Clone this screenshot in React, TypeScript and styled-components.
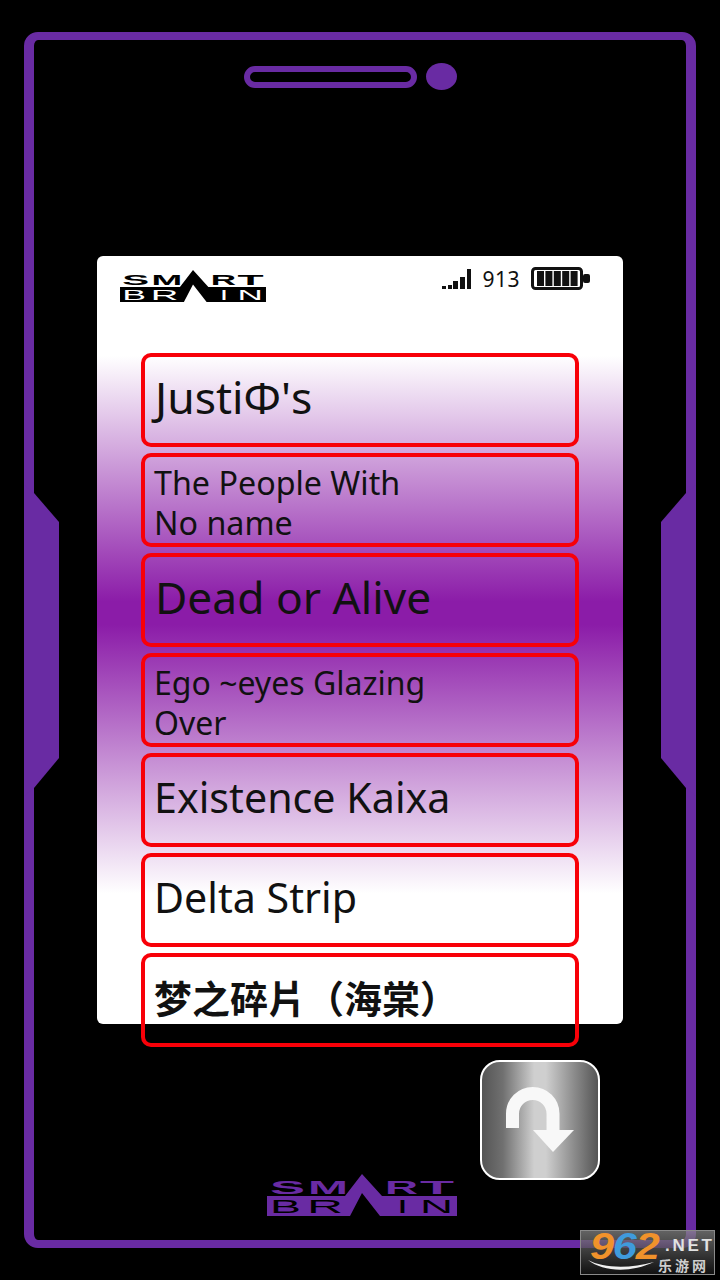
import React from 'react';
import styled, { createGlobalStyle } from 'styled-components';

const GlobalStyle = createGlobalStyle`
  html, body {
    margin: 0;
    background: #000;
  }
  * {
    box-sizing: border-box;
  }
`;

const PURPLE = '#692ba3';

const Page = styled.div`
  position: relative;
  width: 720px;
  height: 1280px;
  padding: 32px 24px;
  background: #000;
  overflow: hidden;
  font-family: 'Noto Sans', 'Open Sans', sans-serif;
`;

const Frame = styled.div`
  position: relative;
  height: 1216px;
  border: solid ${PURPLE};
  border-width: 8px 10px;
  border-radius: 14px;
  display: flex;
  flex-direction: column;
`;

const SideBulge = styled.div<{ $side: 'left' | 'right' }>`
  position: absolute;
  top: 445px;
  ${(p) => p.$side}: -10px;
  width: 35px;
  height: 311px;
  background: ${PURPLE};
  clip-path: ${(p) =>
    p.$side === 'left'
      ? 'polygon(0 0, 10px 8px, 35px 37px, 35px 273px, 10px 303px, 0 311px)'
      : 'polygon(100% 0, 25px 8px, 0 37px, 0 273px, 25px 303px, 100% 311px)'};
`;

const Speaker = styled.div`
  display: flex;
  justify-content: center;
  align-items: center;
  gap: 9px;
  height: 27px;
  margin-top: 23px;
  padding-right: 19px;
`;

const SpeakerSlot = styled.div`
  width: 173px;
  height: 22px;
  border: 6px solid ${PURPLE};
  border-radius: 11px;
`;

const SpeakerDot = styled.div`
  width: 31px;
  height: 27px;
  border-radius: 50%;
  background: ${PURPLE};
`;

const Screen = styled.div`
  height: 768px;
  margin: 166px 63px 0;
  border-radius: 6px;
  background: linear-gradient(
    180deg,
    #fff 0%,
    #fff 13%,
    #8b1ca8 45%,
    #8b1ca8 48%,
    #fff 83%,
    #fff 100%
  );
`;

const StatusBar = styled.div`
  display: flex;
  justify-content: space-between;
  align-items: flex-start;
  height: 97px;
  padding: 11px 33px 0 23px;
`;

const TopLogo = styled.div`
  display: flex;
  margin-top: 3px;
`;

const StatusRight = styled.div`
  display: flex;
  align-items: center;
  gap: 11px;
  color: #111;
  font-size: 21px;
  line-height: 22px;
  letter-spacing: 0.5px;
`;

const List = styled.div`
  display: flex;
  flex-direction: column;
  gap: 6px;
  padding: 0 44px;
`;

const Row = styled.div<{ $size: number; $cjk?: boolean; $lines: number }>`
  height: 94px;
  padding: ${(p) => (p.$lines > 1 ? '6px' : '0')} ${(p) => (p.$size > 43 ? '10px' : '9px')}
    ${(p) => (p.$lines > 1 ? '0' : '6px')};
  border: 4px solid #f80008;
  border-radius: 10px;
  display: flex;
  align-items: center;
  color: #111;
  font-size: ${(p) => p.$size}px;
  line-height: 40px;
  font-weight: ${(p) => (p.$cjk ? 700 : 400)};
  font-family: ${(p) =>
    p.$cjk ? "'Noto Sans CJK TC', sans-serif" : "'Noto Sans', 'Open Sans', sans-serif"};
`;

const Bottom = styled.div`
  display: flex;
  flex-direction: column;
`;

const ReturnButton = styled.div`
  align-self: flex-end;
  width: 120px;
  height: 120px;
  margin: 36px 86px 0 0;
  border: 2px solid #fff;
  border-radius: 20px;
  background: linear-gradient(90deg, #555 0%, #707070 18%, #cfcfcf 45%, #cfcfcf 55%, #8a8a8a 80%, #555 100%);
  display: flex;
`;

const BottomLogo = styled.div`
  align-self: center;
  margin: -6px 0 0 4px;
  display: flex;
`;

const Watermark = styled.div`
  position: absolute;
  right: 5px;
  bottom: 5px;
  width: 135px;
  height: 45px;
  border: 1px solid #8a8a8a;
  background: linear-gradient(180deg, rgba(140, 140, 140, 0.7), rgba(20, 20, 20, 0.85));
  font-family: 'Liberation Sans', sans-serif;
`;

const Digits = styled.div`
  position: absolute;
  top: -2px;
  left: 9px;
  font-weight: 700;
  font-style: italic;
  font-size: 36px;
  line-height: 36px;
  letter-spacing: -1px;
  transform: scaleX(1.2);
  transform-origin: left top;
`;

const Digit = styled.span<{ $color: string }>`
  color: ${(p) => p.$color};
`;

const Net = styled.div`
  position: absolute;
  top: 6px;
  left: 84px;
  color: #e2e2e2;
  font-weight: 700;
  font-size: 17px;
  line-height: 18px;
  letter-spacing: 2.7px;
`;

const WatermarkName = styled.div`
  position: absolute;
  top: 26px;
  left: 77px;
  color: #cfcfcf;
  font-family: 'Noto Sans CJK SC', sans-serif;
  font-weight: 700;
  font-size: 14px;
  line-height: 16px;
  letter-spacing: 3px;
`;

const Swoosh = styled.svg`
  position: absolute;
  left: 6px;
  bottom: 2px;
`;

const topLetters = [
  { t: 'S', x: 3, w: 35 },
  { t: 'M', x: 41, w: 40 },
  { t: 'R', x: 118, w: 33 },
  { t: 'T', x: 153, w: 34 },
];

const bottomLetters = [
  { t: 'B', x: 3, w: 31 },
  { t: 'R', x: 40, w: 36 },
  { t: 'I', x: 130, w: 11 },
  { t: 'N', x: 153, w: 33 },
];

const Logo: React.FC<{ width: number; color: string; cut: string }> = ({ width, color, cut }) => (
  <svg width={width} height={(width * 42) / 190} viewBox="0 0 190 42">
    <polygon points="95,0 115,22 190,22 190,42 113,42 95,19 83,42 0,42 0,22 78,22" fill={color} />
    <g fontFamily="'Liberation Sans', sans-serif" fontSize="18">
      {topLetters.map((l) => (
        <text
          key={l.t + l.x}
          x={l.x}
          y={20}
          textLength={l.w}
          lengthAdjust="spacingAndGlyphs"
          fill={color}
          fontWeight={700}
        >
          {l.t}
        </text>
      ))}
      {bottomLetters.map((l) => (
        <text key={l.t + l.x} x={l.x} y={39} textLength={l.w} lengthAdjust="spacingAndGlyphs" fill={cut}>
          {l.t}
        </text>
      ))}
    </g>
  </svg>
);

const SignalIcon = () => (
  <svg width={29} height={22} viewBox="0 0 29 22" fill="#111">
    <rect x={0} y={18} width={4} height={3} />
    <rect x={6} y={17} width={4} height={4} />
    <rect x={11} y={13} width={5} height={8} />
    <rect x={18} y={9} width={5} height={12} />
    <rect x={25} y={1} width={4} height={20} />
  </svg>
);

const BatteryIcon = () => (
  <svg width={59} height={23} viewBox="0 0 59 23">
    <rect x={1.5} y={1.5} width={49} height={20} rx={3} fill="none" stroke="#111" strokeWidth={3} />
    <rect x={52} y={7} width={7} height={9} rx={2} fill="#111" />
    {[6, 14.4, 22.8, 31.2, 39.6].map((x) => (
      <rect key={x} x={x} y={4} width={7} height={15} fill="#111" />
    ))}
  </svg>
);

const UTurnIcon = () => (
  <svg width={116} height={116} viewBox="2 2 116 116">
    <path d="M32.5 68V53.75a20.25 20.25 0 0 1 40.5 0V72" fill="none" stroke="#f8f8f8" strokeWidth={13} />
    <polygon points="53,70 94,70 73,92" fill="#f8f8f8" />
  </svg>
);

const rows: { lines: string[]; size: number; cjk?: boolean }[] = [
  { lines: ["JustiΦ's"], size: 44.5 },
  { lines: ['The People With', 'No name'], size: 32.25 },
  { lines: ['Dead or Alive'], size: 44.3 },
  { lines: ['Ego ~eyes Glazing', 'Over'], size: 32 },
  { lines: ['Existence Kaixa'], size: 41.2 },
  { lines: ['Delta Strip'], size: 41.2 },
  { lines: ['梦之碎片（海棠）'], size: 38, cjk: true },
];

const App: React.FC = () => (
  <Page>
    <GlobalStyle />
    <Frame>
      <SideBulge $side="left" />
      <SideBulge $side="right" />
      <Speaker>
        <SpeakerSlot />
        <SpeakerDot />
      </Speaker>
      <Screen>
        <StatusBar>
          <TopLogo>
            <Logo width={146} color="#000" cut="#fff" />
          </TopLogo>
          <StatusRight>
            <SignalIcon />
            <span>913</span>
            <BatteryIcon />
          </StatusRight>
        </StatusBar>
        <List>
          {rows.map((r) => (
            <Row key={r.lines[0]} $size={r.size} $cjk={r.cjk} $lines={r.lines.length}>
              <div>
                {r.lines.map((line) => (
                  <div key={line}>{line}</div>
                ))}
              </div>
            </Row>
          ))}
        </List>
      </Screen>
      <Bottom>
        <ReturnButton>
          <UTurnIcon />
        </ReturnButton>
        <BottomLogo>
          <Logo width={190} color={PURPLE} cut="#000" />
        </BottomLogo>
      </Bottom>
    </Frame>
    <Watermark>
      <Digits>
        <Digit $color="#f0922b">9</Digit>
        <Digit $color="#3f9bdc">6</Digit>
        <Digit $color="#f0922b">2</Digit>
      </Digits>
      <Net>.NET</Net>
      <Swoosh width={68} height={13} viewBox="0 0 68 13">
        <path d="M1 1C16 9 42 10 67 3C44 14 16 13 1 1Z" fill="#f0f0f0" />
      </Swoosh>
      <WatermarkName>乐游网</WatermarkName>
    </Watermark>
  </Page>
);

export default App;
